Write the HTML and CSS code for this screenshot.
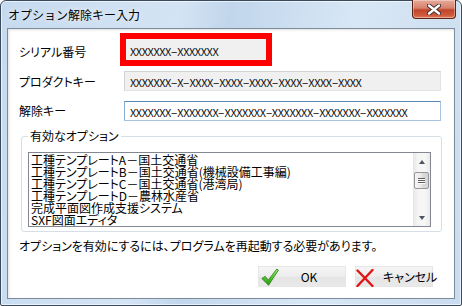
FILE: index.html
```html
<!DOCTYPE html>
<html lang="ja">
<head>
<meta charset="utf-8">
<title>オプション解除キー入力</title>
<link rel="stylesheet" href="styles.css">
</head>
<body>
<div class="window">
  <div class="titlebar">
    <span class="title">オプション解除キー入力</span>
    <div class="close">
      <svg width="14" height="11" viewBox="0 0 14 11">
        <path d="M2 1.5 L12 9.5 M12 1.5 L2 9.5" stroke="#3a2a2a" stroke-width="4.2" stroke-linecap="round" fill="none"/>
        <path d="M2 1.5 L12 9.5 M12 1.5 L2 9.5" stroke="#ffffff" stroke-width="2.4" stroke-linecap="round" fill="none"/>
      </svg>
    </div>
  </div>
  <div class="client">
    <div class="form">
      <div class="row row-serial">
        <span class="label">シリアル番号</span>
        <div class="highlight"><div class="field field-ro serial">XXXXXXX<span class="dash">-</span>XXXXXXX</div></div>
      </div>
      <div class="row row-product">
        <span class="label">プロダクトキー</span>
        <div class="field field-ro wide">XXXXXXX<span class="dash">-</span>X<span class="dash">-</span>XXXX<span class="dash">-</span>XXXX<span class="dash">-</span>XXXX<span class="dash">-</span>XXXX<span class="dash">-</span>XXXX<span class="dash">-</span>XXXX</div>
      </div>
      <div class="row row-release">
        <span class="label">解除キー</span>
        <div class="field field-edit wide">XXXXXXX<span class="dash">-</span>XXXXXXX<span class="dash">-</span>XXXXXXX<span class="dash">-</span>XXXXXXX<span class="dash">-</span>XXXXXXX<span class="dash">-</span>XXXXXXX</div>
      </div>
    </div>
    <fieldset class="group">
      <legend class="legend">有効なオプション</legend>
      <div class="listbox">
        <ul class="items">
          <li>工種テンプレートA－国土交通省</li>
          <li>工種テンプレートB－国土交通省(機械設備工事編)</li>
          <li>工種テンプレートC－国土交通省(港湾局)</li>
          <li>工種テンプレートD－農林水産省</li>
          <li>完成平面図作成支援システム</li>
          <li>SXF図面エディタ</li>
        </ul>
        <div class="scrollbar">
          <div class="sb-btn"><span class="arrow-up"></span></div>
          <div class="sb-track">
            <div class="sb-thumb"><span class="grip"></span><span class="grip"></span><span class="grip"></span></div>
          </div>
          <div class="sb-btn"><span class="arrow-down"></span></div>
        </div>
      </div>
    </fieldset>
    <p class="note">オプションを有効にするには、プログラムを再起動する必要があります。</p>
    <div class="buttons">
      <button class="btn btn-ok">
        <svg class="icon" width="18" height="18" viewBox="0 0 18 18">
          <defs>
            <linearGradient id="g" x1="0" y1="0" x2="0" y2="1">
              <stop offset="0" stop-color="#8ef25c"/>
              <stop offset="1" stop-color="#1e9a0c"/>
            </linearGradient>
          </defs>
          <path d="M0.8 10.5 L4.2 8.3 L7.2 12.2 L15.8 1 L17.4 2.2 L7.6 17.2 Z" fill="url(#g)" stroke="#2f7d1c" stroke-width="0.8" stroke-linejoin="round"/>
        </svg>
        <span class="btn-text">OK</span>
      </button>
      <button class="btn btn-cancel">
        <svg class="icon" width="18" height="18" viewBox="0 0 18 18">
          <path d="M1.5 1.5 Q8 8 16.5 17 M16.5 1 Q9 9 1.5 17" stroke="#e01414" stroke-width="2.4" stroke-linecap="round" fill="none"/>
        </svg>
        <span class="btn-text">キャンセル</span>
      </button>
    </div>
  </div>
</div>
</body>
</html>
```
FILE: styles.css
```css
* { box-sizing: border-box; }
html, body { margin: 0; padding: 0; }
body {
  width: 462px;
  height: 306px;
  overflow: hidden;
  font-family: "Noto Sans CJK JP", sans-serif;
  font-size: 12px;
  color: #000;
  background: #fff;
}
.window {
  width: 462px;
  height: 306px;
  border: 1px solid #3b4b5e;
  border-radius: 6px 6px 2px 2px;
  background: linear-gradient(100deg, #c6daef 0%, #d4e4f4 35%, #c1d6ec 45%, #d8e7f5 70%, #cadcef 100%);
  display: flex;
  flex-direction: column;
  box-shadow: inset 0 0 0 1px rgba(255,255,255,0.6);
}
.titlebar {
  height: 27px;
  display: flex;
  align-items: center;
  padding-left: 7px;
  flex: none;
}
.title {
  font-size: 12px;
  line-height: 16px;
  color: #000;
  text-shadow: 0 0 6px rgba(255,255,255,0.9);
}
.close {
  margin-left: auto;
  margin-right: 5px;
  align-self: flex-start;
  margin-top: -1px;
  width: 44px;
  height: 19px;
  border: 1px solid #5a2418;
  border-top: none;
  border-radius: 0 0 4px 4px;
  background: linear-gradient(#e7a999 0%, #d7826d 45%, #c0452b 55%, #cf5a3c 85%, #e0805c 100%);
  display: flex;
  align-items: center;
  justify-content: center;
  box-shadow: inset 0 0 0 1px rgba(255,255,255,0.35);
}
.client {
  flex: 1;
  margin: 0 6px 6px 6px;
  border: 1px solid #7d8c9c;
  background: #fff;
  box-shadow: inset 1px 1px 3px rgba(0,0,0,0.12);
  display: flex;
  flex-direction: column;
}
.form {
  padding: 4px 0 0 11px;
  display: flex;
  flex-direction: column;
}
.row {
  display: flex;
  align-items: center;
}
.label {
  width: 101px;
  flex: none;
  line-height: 16px;
  font-feature-settings: "palt";
  color: #000;
}
.row-serial { height: 33px; align-items: flex-start; }
.row-serial .label { margin-top: 11px; }
.row-product { margin-top: 5px; height: 20px; }
.row-product .label { margin-top: 2px; }
.row-release { margin-top: 10px; height: 20px; }
.highlight {
  width: 152px;
  height: 33px;
  border: 6px solid #ff0000;
}
.field {
  height: 20px;
  border: 1px solid #dadada;
  padding: 1px 0 0 5px;
  line-height: 18px;
  font-size: 11px;
  letter-spacing: -0.45px;
  white-space: nowrap;
  overflow: hidden;
  color: #111;
}
.dash {
  display: inline-block;
  width: 6.3px;
  letter-spacing: 0;
  text-align: center;
  transform: scaleX(1.9);
}
.field-ro {
  background: #f0f0f0;
  border-color: #d3d3d3 #e3e3e3 #e3e3e3 #d3d3d3;
}
.serial {
  width: 140px;
  height: 21px;
  padding: 2px 0 0 3px;
  border-color: #f4f4f4 #f4f4f4 #f4f4f4 #f4f4f4;
}
.wide {
  width: 317px;
  margin-left: 4px;
}
.field-edit {
  background: #fff;
  border-color: #5d88b6 #a9c4e0 #a9c4e0 #8aaed3;
}
.group {
  margin: 7px 0 0 13px;
  width: 421px;
  padding: 8px 7px 4px 6px;
  border: 1px solid #d5dfe5;
  border-radius: 3px;
  min-width: 0;
}
.legend {
  padding: 0 2px;
  line-height: 16px;
  font-feature-settings: "palt";
}
.listbox {
  width: 403px;
  height: 75px;
  border: 1px solid #828790;
  display: flex;
  background: #fff;
}
.items {
  flex: 1;
  margin: 0;
  padding: 1px 0 0 2px;
  list-style: none;
  line-height: 12px;
  font-size: 12px;
  font-feature-settings: "palt";
  overflow: hidden;
  white-space: nowrap;
}
.items li { height: 12px; }
.scrollbar {
  width: 17px;
  flex: none;
  display: flex;
  flex-direction: column;
  background: linear-gradient(90deg, #e6e6e6, #f5f5f5 30%, #f7f7f7 70%, #eaeaea);
}
.sb-btn {
  height: 17px;
  display: flex;
  align-items: center;
  justify-content: center;
}
.arrow-up {
  width: 0; height: 0;
  border-left: 3.5px solid transparent;
  border-right: 3.5px solid transparent;
  border-bottom: 4px solid #4d5560;
}
.arrow-down {
  width: 0; height: 0;
  border-left: 3.5px solid transparent;
  border-right: 3.5px solid transparent;
  border-top: 4px solid #4d5560;
}
.sb-track {
  flex: 1;
  padding-top: 2px;
}
.sb-thumb {
  height: 17px;
  margin: 0 1px;
  border: 1px solid #979797;
  border-radius: 2px;
  background: linear-gradient(90deg, #f4f4f4, #e8e8e8 50%, #dcdcdc 51%, #d4d4d4);
  display: flex;
  flex-direction: column;
  align-items: center;
  justify-content: center;
  gap: 1px;
}
.grip {
  width: 7px;
  height: 1px;
  background: #5d5d5d;
  box-shadow: 0 1px 0 #fff;
}
.note {
  margin: 6px 0 0 11px;
  line-height: 16px;
  font-feature-settings: "palt";
}
.buttons {
  margin-top: 12px;
  display: flex;
  justify-content: flex-end;
  gap: 9px;
  padding-right: 21px;
}
.btn {
  height: 21px;
  border: 1px solid #e6e6e6;
  background: linear-gradient(#f5f5f5, #ececec 50%, #e4e4e4 51%, #e9e9e9);
  font-family: "Noto Sans CJK JP", sans-serif;
  font-size: 12px;
  color: #000;
  padding: 0;
  display: flex;
  align-items: center;
  white-space: nowrap;
}
.btn-ok { width: 88px; }
.btn-cancel { width: 78px; }
.btn .icon { flex: none; }
.btn-ok .icon { margin-left: 2px; margin-top: 1px; }
.btn-ok .btn-text { flex: 1; text-align: center; padding-right: 6px; }
.btn-cancel .icon { margin-left: 0; margin-top: 2px; }
.btn-cancel .btn-text { margin-left: 9px; font-feature-settings: "palt"; }
```
